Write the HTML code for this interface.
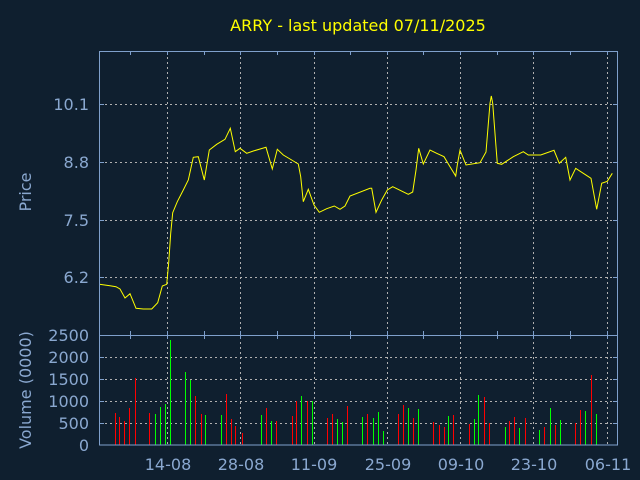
<!DOCTYPE html>
<html><head><meta charset="utf-8"><style>
html,body{margin:0;padding:0;background:#0f1f2f;width:640px;height:480px;overflow:hidden}
svg{display:block}
text{font-family:"DejaVu Sans","Liberation Sans",sans-serif}
</style></head><body>
<svg id="s" width="640" height="480" xmlns="http://www.w3.org/2000/svg" shape-rendering="crispEdges">
<rect width="640" height="480" fill="#0f1f2f"/>
<text x="358" y="31" fill="#ffff00" font-size="16" text-anchor="middle">ARRY - last updated 07/11/2025</text>
<g fill="#8aa8d0" font-size="16" text-anchor="end">
<text x="89" y="110">10.1</text><text x="89" y="168">8.8</text><text x="89" y="226">7.5</text><text x="89" y="283">6.2</text>
<text x="89" y="341">2500</text><text x="89" y="363">2000</text><text x="89" y="385">1500</text><text x="89" y="407">1000</text><text x="89" y="429">500</text><text x="89" y="451">0</text>
</g>
<g fill="#8aa8d0" font-size="16" text-anchor="middle">
<text x="168" y="470">14-08</text><text x="241" y="470">28-08</text><text x="314" y="470">11-09</text><text x="388" y="470">25-09</text><text x="461" y="470">09-10</text><text x="534" y="470">23-10</text><text x="608" y="470">06-11</text>
</g>
<text transform="translate(31,192) rotate(-90)" fill="#8aa8d0" font-size="16" text-anchor="middle">Price</text>
<text transform="translate(31,390) rotate(-90)" fill="#8aa8d0" font-size="16" text-anchor="middle">Volume (0000)</text>
<g id="grid" stroke="#b0b0b0" stroke-width="1" stroke-dasharray="2,3"></g>
<g id="bars"></g>
<polyline id="pl" fill="none" stroke="#ffff00" stroke-width="1" shape-rendering="auto"/>
<g stroke="#7fa0cc" stroke-width="1" fill="none">
<rect x="99.5" y="51.5" width="518" height="393.5"/>
<line x1="99" y1="335.5" x2="618" y2="335.5"/>
</g>
<g id="ticks" stroke="#7fa0cc" stroke-width="1"></g>
</svg>
<script>
var ns="http://www.w3.org/2000/svg";
function ln(g,x1,y1,x2,y2){var l=document.createElementNS(ns,"line");l.setAttribute("x1",x1);l.setAttribute("y1",y1);l.setAttribute("x2",x2);l.setAttribute("y2",y2);document.getElementById(g).appendChild(l);}
[104.5,162.5,220.5,277.5,357.5,379.5,401.5,423.5].forEach(function(y){ln("grid",100,y,617,y);});
[167.5,240.5,314.5,387.5,460.5,533.5,607.5].forEach(function(x){ln("grid",x,52,x,445);});
[104.5,162.5,220.5,277.5,357.5,379.5,401.5,423.5].forEach(function(y){ln("ticks",99,y,104,y);ln("ticks",613,y,618,y);});
[130.5,167.5,204.5,240.5,277.5,314.5,350.5,387.5,423.5,460.5,497.5,533.5,570.5,607.5].forEach(function(x){ln("ticks",x,51,x,55);ln("ticks",x,335,x,339);ln("ticks",x,331,x,335);});
var b="74,250,r;88,262,r;103,273,r;118,235,r;135,145,r;178,250,r;196,252,g;210,232,g;225,222,g;239,30,g;286,126,g;300,150,g;315,198,r;332,252,r;346,255,g;393,255,g;408,192,r;422,267,r;436,288,r;455,309,r;512,255,g;529,234,r;544,273,g;558,273,r;605,258,r;619,213,r;634,198,g;651,213,r;666,213,g;710,264,r;727,252,r;741,267,g;756,276,g;770,228,r;817,261,g;831,252,r;849,264,g;863,246,g;878,303,g;924,252,r;939,225,r;953,234,g;968,264,r;985,237,g;1029,276,r;1046,285,r;1061,291,r;1075,258,g;1090,255,r;1136,282,r;1151,267,g;1165,195,g;1183,201,r;1198,279,r;1244,291,g;1258,273,r;1273,261,r;1287,294,g;1305,264,r;1348,300,g;1363,291,r;1380,234,g;1395,285,r;1409,270,g;1456,279,r;1470,240,r;1485,243,g;1502,135,r;1517,252,g";
var bg=document.getElementById("bars");
b.split(";").forEach(function(s){var p=s.split(",");var x=Math.round(90+p[0]/3);var y=Math.round(330+p[1]/3);var r=document.createElementNS(ns,"rect");r.setAttribute("x",x);r.setAttribute("y",y);r.setAttribute("width",1);r.setAttribute("height",445-y);r.setAttribute("fill",p[2]=="r"?"#ff0000":"#00ff00");bg.appendChild(r);});
var pts="99.3,284.3 110,285.7 116,286.7 120,289 125,298 130,293.7 136,308.3 143.3,309 151.7,309 157.7,302.7 162.3,286 166.7,284.3 168.7,262.7 170.7,233.3 172.7,212.7 177.3,201.7 183.3,190 188.3,180 193.3,157.3 198.3,156.7 204.3,180 209.3,150 216.7,144.3 225,139.3 230.3,128.3 235.3,151.7 240,148.3 246.7,153.3 253.3,151 266,147.3 272.3,169 277.3,149.3 283.3,155 291.7,160 298.3,164 300.7,176.7 303.3,201.7 308.3,189.3 314,205 319.3,212.3 326.7,208.7 334.3,206 340,209.3 345,206 350,196 370,188.3 371.7,188.3 376,212.3 381.7,200 387.3,190 392.7,186.7 408.3,194.3 412.7,192 416,170 418.7,148.3 423.3,164 430,150 436.7,153.3 444,156.7 450,166.7 455.7,176 457.3,165 460,150 466,165 480,162.7 486,152 490,103.3 491.3,96 492.7,103.3 496,146.7 497.3,163.3 501.7,164.3 513.3,156.7 523.3,151.7 528.3,155 540.7,155 554,150.3 559.3,163.3 565.7,157.3 570,180 575.7,168.3 583.3,173.3 591,178.3 596.7,209.3 601.7,183.3 607.3,181.3 612.3,173.3";
document.getElementById("pl").setAttribute("points",pts);
</script>
</body></html>
